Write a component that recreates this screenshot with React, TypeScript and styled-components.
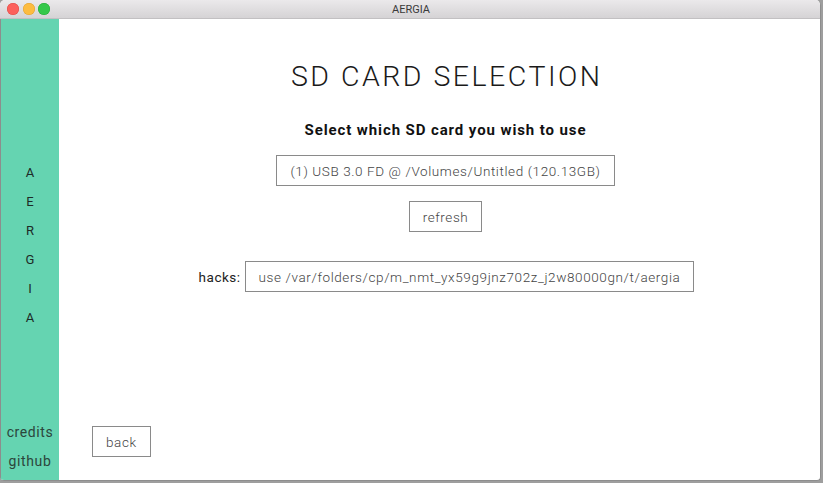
import React from "react";
import styled, { createGlobalStyle } from "styled-components";

const Global = createGlobalStyle`
  html, body { margin: 0; padding: 0; }
  body {
    width: 823px;
    height: 483px;
    background: #9e9e9e;
    overflow: hidden;
    font-family: Roboto, "Liberation Sans", sans-serif;
  }
`;

const Window = styled.div`
  width: 821px;
  height: 481px;
  display: flex;
  flex-direction: column;
  background: #ffffff;
  border-right: 1px solid #8d8d8d;
  border-bottom: 1px solid #8d8d8d;
  border-radius: 5px 5px 4px 4px;
  overflow: hidden;
  box-sizing: border-box;
`;

const TitleBar = styled.div`
  position: relative;
  height: 19px;
  flex: none;
  display: flex;
  align-items: center;
  justify-content: center;
  background: linear-gradient(#ebe9eb, #d5d3d5);
  border-bottom: 1px solid #c2c0c2;
  box-sizing: border-box;
`;

const Lights = styled.div`
  position: absolute;
  left: 7px;
  top: 3px;
  display: flex;
  gap: 3.5px;
`;

const Light = styled.span<{ $c: string; $b: string }>`
  width: 12px;
  height: 12px;
  border-radius: 50%;
  background: ${(p) => p.$c};
  box-shadow: inset 0 0 0 0.5px ${(p) => p.$b};
`;

const WindowTitle = styled.span`
  font-family: Roboto, "Liberation Sans", Arial, sans-serif;
  font-size: 11px;
  color: #3a3a3a;
  margin-left: 2px;
`;

const Body = styled.div`
  flex: 1;
  display: flex;
  min-height: 0;
`;

const Sidebar = styled.nav`
  width: 58px;
  flex: none;
  background: #65d4b1;
  display: flex;
  flex-direction: column;
  align-items: center;
  border-left: 1px solid #8d8d8d;
`;

const Letters = styled.div`
  margin-top: 145px;
  display: flex;
  flex-direction: column;
  align-items: center;
  gap: 11px;
`;

const Letter = styled.span`
  font-size: 13px;
  line-height: 18px;
  color: #1d2b26;
  height: 18px;
`;

const SideLinks = styled.div`
  margin-top: auto;
  margin-bottom: 10px;
  display: flex;
  flex-direction: column;
  align-items: center;
  gap: 11px;
`;

const SideLink = styled.span`
  font-size: 14px;
  line-height: 18px;
  letter-spacing: 0.6px;
  color: #2c463c;
`;

const Main = styled.main`
  flex: 1;
  display: flex;
  flex-direction: column;
  align-items: center;
  padding-left: 12px;
  position: relative;
`;

const Heading = styled.h1`
  margin: 40px 0 0;
  font-size: 28.5px;
  font-weight: 300;
  letter-spacing: 2.5px;
  line-height: 36px;
  color: #1a1a1a;
  padding-left: 2.5px;
`;

const Sub = styled.h2`
  margin: 25px 0 0;
  font-size: 15px;
  font-weight: 700;
  letter-spacing: 0.9px;
  line-height: 20px;
  color: #111;
`;

const Box = styled.div`
  height: 31px;
  box-sizing: border-box;
  border: 1px solid #8a8a8a;
  display: flex;
  align-items: center;
  padding: 0 13px;
  font-size: 13.5px;
  font-weight: 300;
  letter-spacing: 0.6px;
  color: #444;
  background: #fff;
`;

const Select = styled(Box)`
  margin-top: 15px;
`;

const Button = styled(Box)`
  margin-top: 15px;
  cursor: pointer;
`;

const HackRow = styled.div`
  margin-top: 29px;
  margin-left: 2px;
  display: flex;
  align-items: center;
  gap: 4px;
`;

const HackLabel = styled.span`
  font-size: 13.5px;
  letter-spacing: 0.5px;
  color: #222;
`;

const Footer = styled.div`
  margin-top: auto;
  margin-bottom: 23px;
  align-self: flex-start;
  margin-left: 21px;
`;

export default function App() {
  return (
    <>
      <Global />
      <Window>
        <TitleBar>
          <Lights>
            <Light $c="#fc605c" $b="#de4a45" />
            <Light $c="#fdbc40" $b="#dea034" />
            <Light $c="#34c84a" $b="#27aa35" />
          </Lights>
          <WindowTitle>AERGIA</WindowTitle>
        </TitleBar>
        <Body>
          <Sidebar>
            <Letters>
              {"AERGIA".split("").map((l, i) => (
                <Letter key={i}>{l}</Letter>
              ))}
            </Letters>
            <SideLinks>
              <SideLink>credits</SideLink>
              <SideLink>github</SideLink>
            </SideLinks>
          </Sidebar>
          <Main>
            <Heading>SD CARD SELECTION</Heading>
            <Sub>Select which SD card you wish to use</Sub>
            <Select>(1) USB 3.0 FD @ /Volumes/Untitled (120.13GB)</Select>
            <Button>refresh</Button>
            <HackRow>
              <HackLabel>hacks:</HackLabel>
              <Box>use /var/folders/cp/m_nmt_yx59g9jnz702z_j2w80000gn/t/aergia</Box>
            </HackRow>
            <Footer>
              <Button as="div">back</Button>
            </Footer>
          </Main>
        </Body>
      </Window>
    </>
  );
}
